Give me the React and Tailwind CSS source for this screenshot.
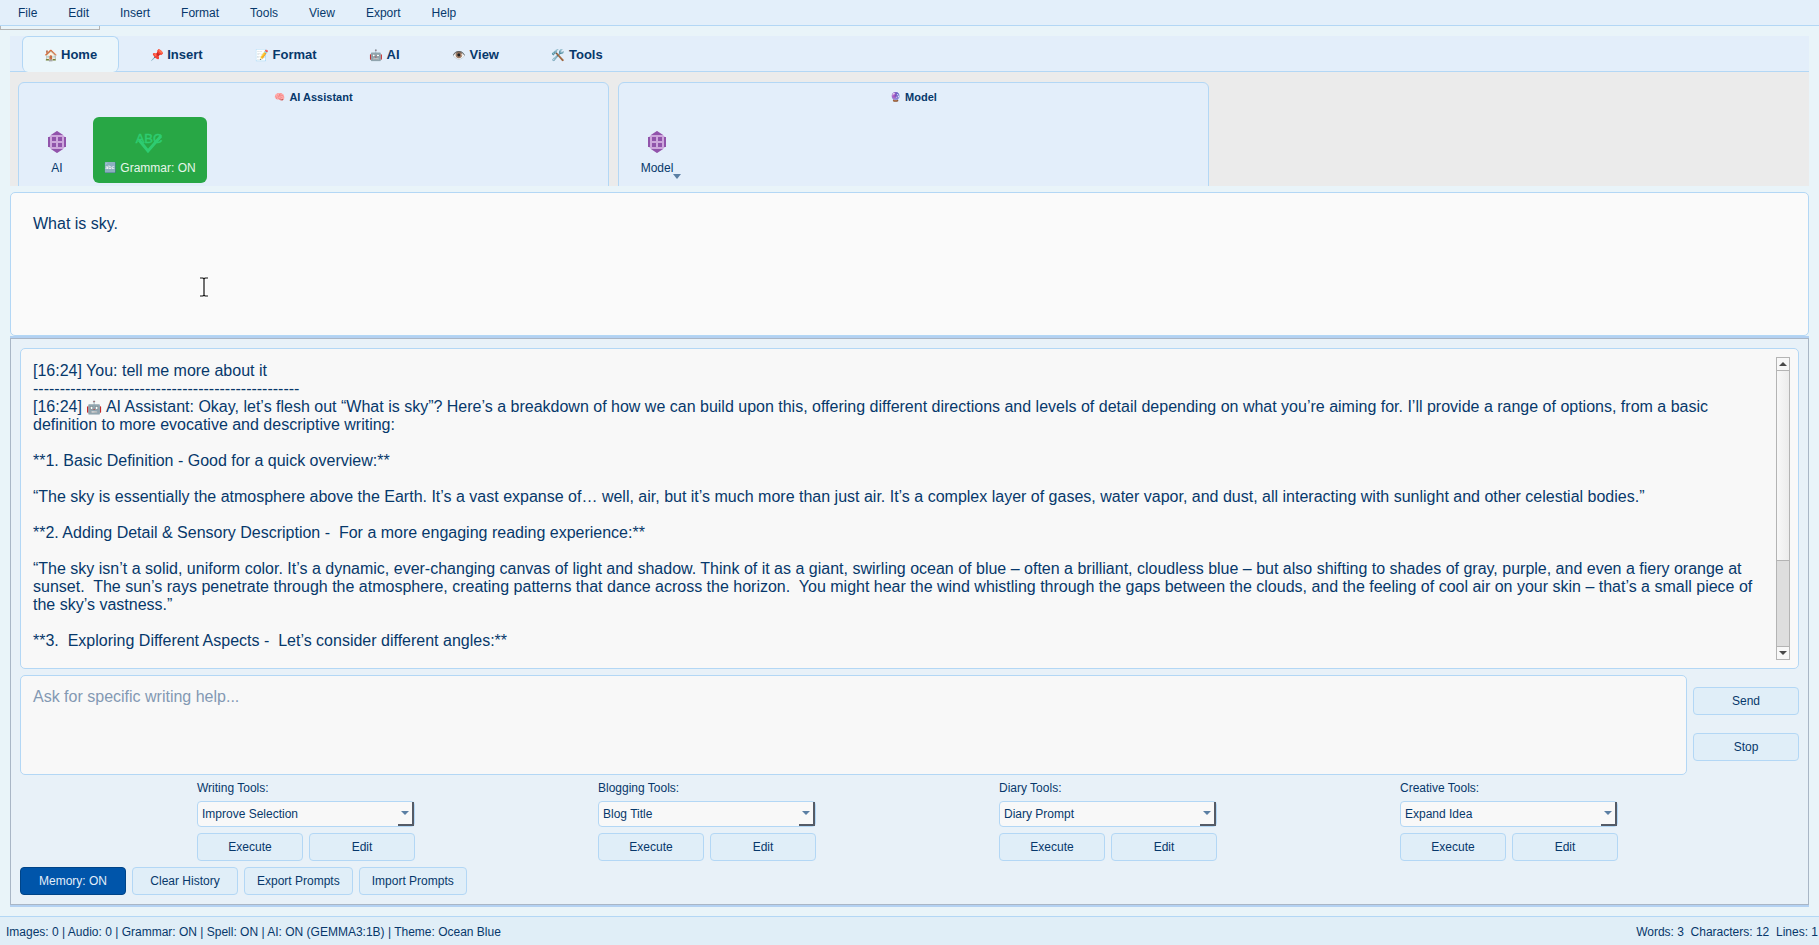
import React, { useState } from 'react';

const menuItems = ['File', 'Edit', 'Insert', 'Format', 'Tools', 'View', 'Export', 'Help'];

const tabs = [
  { icon: '🏠', label: 'Home' },
  { icon: '📌', label: 'Insert' },
  { icon: '📝', label: 'Format' },
  { icon: '🤖', label: 'AI' },
  { icon: '👁️', label: 'View' },
  { icon: '🛠️', label: 'Tools' }
];

const toolGroups = [
  { id: 'writing', label: 'Writing Tools:', options: ['Improve Selection', 'Fix Grammar', 'Summarize'] },
  { id: 'blogging', label: 'Blogging Tools:', options: ['Blog Title', 'Blog Outline', 'Blog Intro'] },
  { id: 'diary', label: 'Diary Tools:', options: ['Diary Prompt', 'Reflection', 'Mood Summary'] },
  { id: 'creative', label: 'Creative Tools:', options: ['Expand Idea', 'Plot Twist', 'Character Sketch'] }
];

const chatStart = `[16:24] You: tell me more about it
--------------------------------------------------
[16:24] `;

const chatReply = [
  ' AI Assistant: Okay, let’s flesh out “What is sky”? Here’s a breakdown of how we can build upon this, offering different directions and levels of detail depending on what you’re aiming for. I’ll provide a range of options, from a basic definition to more evocative and descriptive writing:',
  '',
  '**1. Basic Definition - Good for a quick overview:**',
  '',
  '“The sky is essentially the atmosphere above the Earth. It’s a vast expanse of… well, air, but it’s much more than just air. It’s a complex layer of gases, water vapor, and dust, all interacting with sunlight and other celestial bodies.”',
  '',
  '**2. Adding Detail & Sensory Description -  For a more engaging reading experience:**',
  '',
  '“The sky isn’t a solid, uniform color. It’s a dynamic, ever-changing canvas of light and shadow. Think of it as a giant, swirling ocean of blue – often a brilliant, cloudless blue – but also shifting to shades of gray, purple, and even a fiery orange at sunset.  The sun’s rays penetrate through the atmosphere, creating patterns that dance across the horizon.  You might hear the wind whistling through the gaps between the clouds, and the feeling of cool air on your skin – that’s a small piece of the sky’s vastness.”',
  '',
  '**3.  Exploring Different Aspects -  Let’s consider different angles:**'
];

const ModelIcon = () => (
  <svg width="20" height="24" viewBox="0 0 20 24" aria-hidden="true">
    <path d="M10 1 L16 5 L19 8 V16 L16 19 L10 23 L4 19 L1 16 V8 L4 5 Z" fill="#cda6dc" />
    <path d="M10 1 L16 5 H4 Z M10 23 L16 19 H4 Z" fill="#9154ab" />
    <path
      d="M1 7 H3 V17 H1 Z M17 7 H19 V17 H17 Z M5 7 H9 V11 H5 Z M11 7 H15 V11 H11 Z M5 13 H9 V17 H5 Z M11 13 H15 V17 H11 Z"
      fill="#9154ab"
    />
  </svg>
);

const GrammarIcon = () => (
  <svg width="30" height="24" viewBox="0 0 30 24" aria-hidden="true">
    <text x="14" y="13" textAnchor="middle" fontSize="13" fill="#2ecc71" stroke="#2ecc71" strokeWidth="0.5" fontFamily="Liberation Sans, sans-serif">
      ABC
    </text>
    <path d="M4 10 L13 21 L26 6" fill="none" stroke="#2ecc71" strokeWidth="3" />
  </svg>
);

const Button = ({ children, wide }) => (
  <button
    type="button"
    className={
      wide
        ? 'h-7 px-3 rounded border border-[#b3d7f5] bg-[#e0eef8] hover:bg-[#cfe5f7]'
        : 'h-7 w-[106px] rounded border border-[#b3d7f5] bg-[#e0eef8] hover:bg-[#cfe5f7]'
    }
  >
    {children}
  </button>
);

const RibbonGroup = ({ icon, title, children }) => (
  <section className="h-32 rounded-md border border-[#b3d7f5] bg-[#e3eefa]">
    <h2 className="mt-1.5 flex h-4 items-center justify-center gap-1 text-[11px] font-bold">
      <span className="text-[9px]">{icon}</span>
      {title}
    </h2>
    {children}
  </section>
);

const App = () => {
  const [activeTab, setActiveTab] = useState('Home');
  const [text, setText] = useState('What is sky.');
  const [prompt, setPrompt] = useState('');
  const [memoryOn, setMemoryOn] = useState(true);

  return (
    <div className="flex min-h-screen flex-col bg-[#e9f4f9] font-['Liberation_Sans',sans-serif] text-xs text-[#07386b]">
      {/* Menu bar */}
      <nav className="flex h-[26px] shrink-0 items-center gap-[31px] border-b border-[#b3d7f5] bg-[#e3effa] pl-[18px]">
        {menuItems.map((item) => (
          <button key={item} type="button">{item}</button>
        ))}
      </nav>
      <div className="h-1 w-[100px] shrink-0 border-x border-b border-[#b4b4b4]" />

      <main className="flex flex-1 flex-col px-2.5 pt-1.5 pb-[11px]">
        {/* Ribbon */}
        <div className="flex h-9 shrink-0 gap-[9px] border-b border-[#b3d7f5] bg-[#e3eefa] pl-3">
          {tabs.map((tab) => (
            <button
              key={tab.label}
              type="button"
              onClick={() => setActiveTab(tab.label)}
              className={
                activeTab === tab.label
                  ? 'flex h-9 items-center gap-1 rounded-md border border-b-0 border-[#b3d7f5] bg-[#ebf6fb] px-[21px] pt-px text-[13px] font-bold'
                  : 'flex h-9 items-center gap-1 px-[22px] pt-0.5 text-[13px] font-bold'
              }
            >
              <span className="flex w-[13px] justify-center text-[11px]">{tab.icon}</span>
              {tab.label}
            </button>
          ))}
        </div>
        <div className="h-[114px] shrink-0 overflow-hidden bg-[#ebebeb] pt-2.5 pl-2">
          <div className="grid grid-cols-3 gap-[9px]">
            <RibbonGroup icon="🧠" title="AI Assistant">
              <div className="mt-3 flex gap-4 pl-[18px]">
                <button type="button" className="flex h-[66px] w-10 flex-col items-center pt-[13px]">
                  <ModelIcon />
                  <span className="mt-1.5">AI</span>
                </button>
                <button
                  type="button"
                  className="flex h-[66px] w-[114px] flex-col items-center rounded-md bg-[#28a745] pt-[13px] text-[#e6f6ea]"
                >
                  <GrammarIcon />
                  <span className="mt-1.5 flex items-center gap-1">
                    <span className="flex w-3 justify-center text-[10px]">🔤</span>
                    Grammar: ON
                  </span>
                </button>
              </div>
            </RibbonGroup>
            <RibbonGroup icon="🔮" title="Model">
              <div className="mt-3 pl-[14px]">
                <button type="button" className="relative flex h-[66px] w-12 flex-col items-center pt-[13px]">
                  <ModelIcon />
                  <span className="mt-1.5">Model</span>
                  <svg className="absolute right-0 bottom-1" width="8" height="5" viewBox="0 0 8 5" aria-hidden="true">
                    <path d="M0 0 H8 L4 5 Z" fill="#5b7fa3" />
                  </svg>
                </button>
              </div>
            </RibbonGroup>
          </div>
        </div>

        {/* Document editor */}
        <div className="relative mt-1.5 h-36 shrink-0">
          <textarea
            aria-label="Document"
            value={text}
            onChange={(e) => setText(e.target.value)}
            className="block h-full w-full resize-none rounded-[5px] border border-[#b3d7f5] bg-[#fafafa] px-[22px] py-[22px] text-base leading-[18px] outline-none"
          />
          {/* Text cursor */}
          <svg className="pointer-events-none absolute top-[84px] left-[188px]" width="12" height="22" viewBox="0 0 12 22" aria-hidden="true">
            <path d="M2 2 H5 L6 3 L7 2 H10 M6 3 V19 M2 20 H5 L6 19 L7 20 H10" fill="none" stroke="#fff" strokeWidth="3" />
            <path d="M2 2 H5 L6 3 L7 2 H10 M6 3 V19 M2 20 H5 L6 19 L7 20 H10" fill="none" stroke="#111" strokeWidth="1.2" />
          </svg>
        </div>
        <div className="h-0.5 shrink-0 bg-[#b3d1f2]" />

        {/* Assistant panel */}
        <div className="flex flex-1 flex-col border border-[#a9b6c6] bg-[#e8f1f8] p-[9px] shadow-[0_2px_0_#b3d1f2]">
          <div className="flex h-80 grow rounded-[5px] border border-[#b3d7f5] bg-[#f8f8f8] py-2 pr-2 pl-3">
            <div className="min-w-0 flex-1 pt-[5px] pr-1.5 text-base leading-[18px] whitespace-pre-wrap">
              {chatStart}
              <span className="text-[13px] leading-none">🤖</span>
              {chatReply.join('\n')}
            </div>
            <div className="flex w-3.5 shrink-0 flex-col border border-[#b4b4b4] bg-[#dedede]" aria-hidden="true">
              <div className="flex h-[13px] items-center justify-center border-b border-[#b4b4b4] bg-[#f8f8f8]">
                <svg width="8" height="4" viewBox="0 0 8 4"><path d="M4 0 L8 4 H0 Z" fill="#4a4a4a" /></svg>
              </div>
              <div className="h-[63%] border-b border-[#b4b4b4] bg-linear-to-r from-[#f8f8f8] to-[#ececec]" />
              <div className="mt-auto flex h-[13px] items-center justify-center border-t border-[#b4b4b4] bg-[#f8f8f8]">
                <svg width="8" height="4" viewBox="0 0 8 4"><path d="M0 0 H8 L4 4 Z" fill="#4a4a4a" /></svg>
              </div>
            </div>
          </div>

          <div className="mt-1.5 flex h-[100px] shrink-0 gap-1.5">
            <textarea
              aria-label="Prompt"
              value={prompt}
              onChange={(e) => setPrompt(e.target.value)}
              placeholder="Ask for specific writing help..."
              className="block min-w-0 flex-1 resize-none rounded-[5px] border border-[#b3d7f5] bg-[#f8f8f8] px-3 py-3 text-base leading-[18px] outline-none placeholder:text-[#8399b3]"
            />
            <div className="flex flex-col justify-center gap-[18px] pb-0.5">
              <Button>Send</Button>
              <Button>Stop</Button>
            </div>
          </div>

          <div className="mt-1.5 flex shrink-0 justify-evenly gap-1.5 pr-1">
            {toolGroups.map((group) => (
              <div key={group.id} className="w-[218px]">
                <label htmlFor={group.id} className="block h-5 leading-[14px]">{group.label}</label>
                <div className="relative">
                  <select
                    id={group.id}
                    className="block h-[26px] w-full appearance-none rounded border border-[#b3d7f5] bg-[#f8f8f8] px-1 outline-none"
                  >
                    {group.options.map((option) => (
                      <option key={option}>{option}</option>
                    ))}
                  </select>
                  <span className="pointer-events-none absolute top-px right-px flex h-6 w-4 items-center justify-center border-r-2 border-b-2 border-[#555b66]">
                    <svg width="8" height="4" viewBox="0 0 8 4" aria-hidden="true"><path d="M0 0 H8 L4 4 Z" fill="#5b7fa3" /></svg>
                  </span>
                </div>
                <div className="mt-1.5 flex gap-1.5">
                  <Button>Execute</Button>
                  <Button>Edit</Button>
                </div>
              </div>
            ))}
          </div>

          <div className="mt-1.5 flex shrink-0 gap-1.5">
            <button
              type="button"
              onClick={() => setMemoryOn(!memoryOn)}
              className="h-7 w-[106px] rounded border border-[#004488] bg-[#0055aa] text-[#e3effa]"
            >
              Memory: {memoryOn ? 'ON' : 'OFF'}
            </button>
            <Button>Clear History</Button>
            <Button wide>Export Prompts</Button>
            <Button wide>Import Prompts</Button>
          </div>
        </div>
      </main>

      {/* Status bar */}
      <footer className="flex h-[29px] shrink-0 items-center justify-between border-t border-[#b3d7f5] bg-[#e0eef7] pt-px pr-px pl-1.5">
        <span>Images: 0 | Audio: 0 | Grammar: ON | Spell: ON | AI: ON (GEMMA3:1B) | Theme: Ocean Blue</span>
        <span className="whitespace-pre">Words: 3  Characters: 12  Lines: 1</span>
      </footer>
    </div>
  );
};

export default App;
